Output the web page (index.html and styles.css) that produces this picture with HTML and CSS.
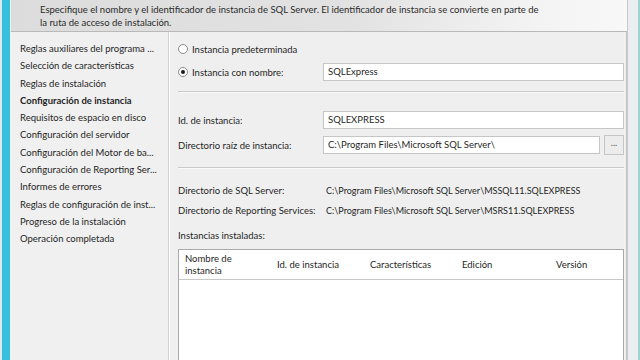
FILE: index.html
```html
<!DOCTYPE html>
<html lang="es">
<head>
    <meta charset="UTF-8">
    <title>Configuración de instancia</title>
    <link rel="stylesheet" href="styles.css">
</head>
<body>
<div class="screen">
    <div class="edge-left"></div>
    <div class="window">
        <div class="header">
            <p>Especifique el nombre y el identificador de instancia de SQL Server. El identificador de instancia se convierte en parte de<br>la ruta de acceso de instalación.</p>
        </div>
        <div class="main">
            <ul class="steps">
                <li>Reglas auxiliares del programa ...</li>
                <li>Selección de características</li>
                <li>Reglas de instalación</li>
                <li class="current">Configuración de instancia</li>
                <li>Requisitos de espacio en disco</li>
                <li>Configuración del servidor</li>
                <li>Configuración del Motor de ba...</li>
                <li>Configuración de Reporting Ser...</li>
                <li>Informes de errores</li>
                <li>Reglas de configuración de inst...</li>
                <li>Progreso de la instalación</li>
                <li>Operación completada</li>
            </ul>
            <div class="content">
                <div class="row radio-row">
                    <span class="radio"></span>
                    <span>Instancia predeterminada</span>
                </div>
                <div class="row field">
                    <label class="radio-label"><span class="radio checked"></span>Instancia con nombre:</label>
                    <div class="input">SQLExpress</div>
                </div>
                <div class="sep"></div>
                <div class="row field id-row">
                    <label>Id. de instancia:</label>
                    <div class="input">SQLEXPRESS</div>
                </div>
                <div class="row field dir-row">
                    <label>Directorio raíz de instancia:</label>
                    <div class="input">C:\Program Files\Microsoft SQL Server\</div>
                    <div class="browse">...</div>
                </div>
                <div class="sep sep2"></div>
                <div class="row info first-info">
                    <label>Directorio de SQL Server:</label>
                    <span class="path">C:\Program Files\Microsoft SQL Server\MSSQL11.SQLEXPRESS</span>
                </div>
                <div class="row info">
                    <label>Directorio de Reporting Services:</label>
                    <span class="path">C:\Program Files\Microsoft SQL Server\MSRS11.SQLEXPRESS</span>
                </div>
                <div class="installed-label">Instancias instaladas:</div>
                <div class="grid">
                    <div class="grid-head">
                        <div class="col c1">Nombre de<br>instancia</div>
                        <div class="col c2">Id. de instancia</div>
                        <div class="col c3">Características</div>
                        <div class="col c4">Edición</div>
                        <div class="col c5">Versión</div>
                    </div>
                </div>
            </div>
        </div>
    </div>
    <div class="edge-right"></div>
</div>
</body>
</html>
```

FILE: styles.css
```css
body {
    margin: 0;
    font-family: Lato, 'Noto Sans', sans-serif;
    font-size: 9.5px;
    color: #1f1f1f;
    background: #f0f0f0;
}
.screen {
    display: flex;
    width: 640px;
    height: 360px;
    overflow: hidden;
}
.edge-left {
    width: 8px;
    flex: none;
    background: #38bfdc;
    border-left: 2px solid #dfe8ea;
    border-right: 1px solid #e8f4f6;
}
.edge-right {
    width: 10px;
    flex: none;
    background: #e9eef0;
    border-left: 1px solid #c8c8c8;
    border-right: 2px solid #9fd3cf;
}
.window {
    flex: 1;
    display: flex;
    flex-direction: column;
}
.header {
    height: 31px;
    flex: none;
    border-bottom: 1px solid #b9b9b9;
    background: linear-gradient(90deg, #dcdcdc 0%, #e2e2e2 55%, #f3f3f3 85%, #f8f8f8 100%);
}
.header p {
    margin: 0;
    padding: 4px 0 0 29px;
    line-height: 12.5px;
    color: #2a2a2a;
}
.main {
    flex: 1;
    display: flex;
}
.steps {
    list-style: none;
    margin: 0;
    padding: 8px 0 0 9px;
    width: 148px;
    flex: none;
    border-right: 1px solid #d4d4d4;
    box-shadow: 1px 0 0 #fbfbfb;
    background: #f0f0f0;
}
.steps li {
    height: 17.3px;
    line-height: 17px;
    white-space: nowrap;
}
.steps .current {
    font-weight: bold;
}
.content {
    flex: 1;
    padding: 8px 0 0 8px;
    margin-left: 1px;
    background: #efefef;
    border-right: 1px solid #c4c4c4;
}
.row {
    display: flex;
    align-items: center;
    height: 18px;
}
.radio {
    width: 8px;
    height: 8px;
    border: 1px solid #8a8a8a;
    border-radius: 50%;
    background: #fff;
    margin-right: 4px;
    flex: none;
    position: relative;
}
.radio.checked::after {
    content: "";
    position: absolute;
    left: 2px;
    top: 2px;
    width: 4px;
    height: 4px;
    border-radius: 50%;
    background: #1a1a1a;
}
.field {
    margin-top: 5px;
}
.field label {
    width: 145px;
    flex: none;
    display: flex;
    align-items: center;
}
.input {
    flex: 1;
    height: 16px;
    line-height: 16px;
    border: 1px solid #c6c6c6;
    background: #fff;
    padding-left: 4px;
    margin-right: 2px;
}
.sep {
    height: 0;
    border-top: 1px solid #c9c9c9;
    border-bottom: 1px solid #fafafa;
    margin: 10px 2px 0 0;
}
.id-row {
    margin-top: 18px;
}
.dir-row {
    margin-top: 7px;
}
.dir-row .input {
    margin-right: 4px;
}
.browse {
    width: 18px;
    height: 18px;
    line-height: 14px;
    border: 1px solid #c6c6c6;
    background: #ececec;
    text-align: center;
    color: #555;
    margin-right: 2px;
    font-size: 9px;
}
.sep2 {
    margin-top: 13px;
}
.info {
    height: 20px;
}
.first-info {
    margin-top: 11px;
}
.info label {
    width: 148px;
    flex: none;
}
.path {
    font-size: 9px;
}
.installed-label {
    margin-top: 6px;
    height: 20px;
    line-height: 20px;
}
.grid {
    margin: 3px 2px 0 0;
    height: 120px;
    border: 1px solid #a9a9a9;
    background: #fff;
}
.grid-head {
    display: flex;
    align-items: center;
    height: 29px;
    border-bottom: 1px solid #c8c8c8;
}
.col {
    line-height: 12px;
    padding-left: 6px;
}
.c1 { width: 86px; }
.c2 { width: 87px; }
.c3 { width: 86px; }
.c4 { width: 88px; }
.c5 { width: 60px; }
```
